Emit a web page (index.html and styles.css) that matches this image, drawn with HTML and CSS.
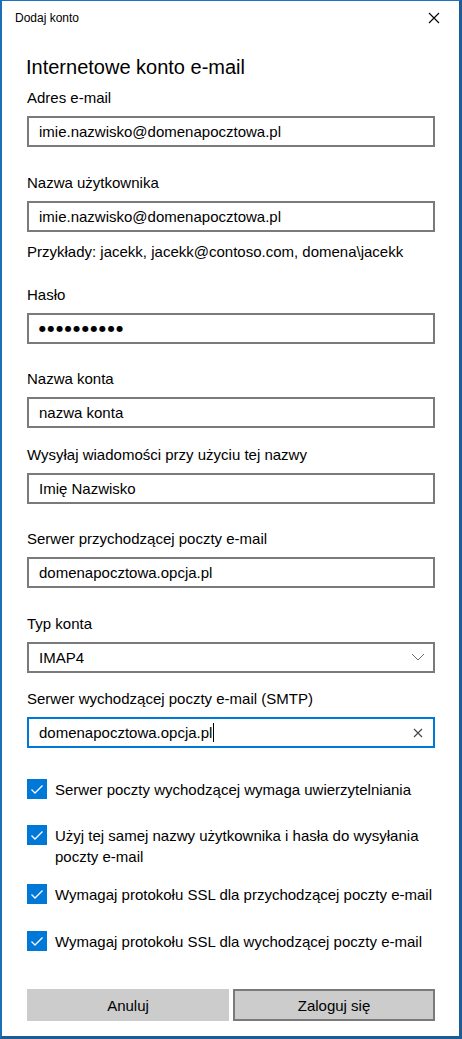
FILE: index.html
```html
<!DOCTYPE html>
<html lang="pl">
<head>
<meta charset="utf-8">
<title>Dodaj konto</title>
<link rel="stylesheet" href="styles.css">
</head>
<body>
<div class="window">
  <div class="titlebar">
    <span class="title">Dodaj konto</span>
    <svg class="close" width="12" height="12" viewBox="0 0 12 12"><path d="M1 1 L11 11 M11 1 L1 11" stroke="#000" stroke-width="1.1" fill="none"/></svg>
  </div>
  <div class="content">
    <h1 class="heading">Internetowe konto e-mail</h1>

    <div class="field field-first">
      <div class="label">Adres e-mail</div>
      <div class="input">imie.nazwisko@domenapocztowa.pl</div>
    </div>

    <div class="field">
      <div class="label">Nazwa użytkownika</div>
      <div class="input">imie.nazwisko@domenapocztowa.pl</div>
      <div class="hint">Przykłady: jacekk, jacekk@contoso.com, domena\jacekk</div>
    </div>

    <div class="field field-after-hint">
      <div class="label">Hasło</div>
      <div class="input"><span class="dots">●●●●●●●●●●</span></div>
    </div>

    <div class="field">
      <div class="label">Nazwa konta</div>
      <div class="input">nazwa konta</div>
    </div>

    <div class="field field-tight">
      <div class="label">Wysyłaj wiadomości przy użyciu tej nazwy</div>
      <div class="input">Imię Nazwisko</div>
    </div>

    <div class="field">
      <div class="label">Serwer przychodzącej poczty e-mail</div>
      <div class="input">domenapocztowa.opcja.pl</div>
    </div>

    <div class="field">
      <div class="label">Typ konta</div>
      <div class="input select">
        <span>IMAP4</span>
        <svg class="chevron" width="14" height="8" viewBox="0 0 14 8"><path d="M1 1 L7 7 L13 1" stroke="#6d6d6d" stroke-width="1" fill="none"/></svg>
      </div>
    </div>

    <div class="field field-tight">
      <div class="label">Serwer wychodzącej poczty e-mail (SMTP)</div>
      <div class="input focused">
        <span>domenapocztowa.opcja.pl</span><span class="caret"></span>
        <svg class="clear" width="10" height="10" viewBox="0 0 10 10"><path d="M1 1 L9 9 M9 1 L1 9" stroke="#444" stroke-width="1.1" fill="none"/></svg>
      </div>
    </div>

    <div class="checks">
      <div class="check">
        <span class="box"><svg width="20" height="20" viewBox="0 0 20 20"><path d="M4.5 10.5 L8 14 L15.5 6.5" stroke="#fff" stroke-width="1.3" fill="none"/></svg></span>
        <span class="check-text">Serwer poczty wychodzącej wymaga uwierzytelniania</span>
      </div>
      <div class="check check-multi">
        <span class="box"><svg width="20" height="20" viewBox="0 0 20 20"><path d="M4.5 10.5 L8 14 L15.5 6.5" stroke="#fff" stroke-width="1.3" fill="none"/></svg></span>
        <span class="check-text">Użyj tej samej nazwy użytkownika i hasła do wysyłania poczty e-mail</span>
      </div>
      <div class="check">
        <span class="box"><svg width="20" height="20" viewBox="0 0 20 20"><path d="M4.5 10.5 L8 14 L15.5 6.5" stroke="#fff" stroke-width="1.3" fill="none"/></svg></span>
        <span class="check-text">Wymagaj protokołu SSL dla przychodzącej poczty e-mail</span>
      </div>
      <div class="check">
        <span class="box"><svg width="20" height="20" viewBox="0 0 20 20"><path d="M4.5 10.5 L8 14 L15.5 6.5" stroke="#fff" stroke-width="1.3" fill="none"/></svg></span>
        <span class="check-text">Wymagaj protokołu SSL dla wychodzącej poczty e-mail</span>
      </div>
    </div>

    <div class="buttons">
      <button class="btn">Anuluj</button>
      <button class="btn btn-primary">Zaloguj się</button>
    </div>
  </div>
</div>
</body>
</html>
```
FILE: styles.css
```css
* { box-sizing: border-box; }
html, body {
  margin: 0;
  padding: 0;
  background: #1d5d94;
}
body {
  font-family: "Liberation Sans", Arial, sans-serif;
  color: #000;
  width: 462px;
  height: 1039px;
}
.window {
  width: 462px;
  height: 1039px;
  background: #fff;
  border-top: 1px solid #1a73c4;
  border-left: 2px solid #1a6fb8;
  border-right: 3px solid #1d5d94;
  border-bottom: 3px solid #1d5d94;
  display: flex;
  flex-direction: column;
}
.titlebar {
  height: 33px;
  display: flex;
  align-items: center;
  justify-content: space-between;
  padding: 0 19px 0 13px;
}
.title {
  font-size: 12px;
}
.close { display: block; }
.content {
  padding: 0 24px 0 25px;
  display: flex;
  flex-direction: column;
}
.heading {
  margin: 19px 0 0 -1px;
  font-size: 20px;
  font-weight: normal;
  line-height: 28px;
}
.field {
  margin-top: 25.5px;
  display: flex;
  flex-direction: column;
}
.field-first { margin-top: 7px; }
.field-after-hint { margin-top: 23px; }
.field-tight { margin-top: 16.5px; }
.label {
  font-size: 15px;
  line-height: 20px;
  height: 20px;
  margin-bottom: 8px;
}
.input {
  height: 31px;
  border: 2px solid #7a7a7a;
  font-size: 15px;
  line-height: 27px;
  padding: 0 10px;
  display: flex;
  align-items: center;
  white-space: nowrap;
}
.hint {
  font-size: 15px;
  line-height: 20px;
  margin-top: 10px;
}
.dots {
  font-family: "DejaVu Sans", sans-serif;
  font-size: 8px;
  letter-spacing: 1.6px;
}
.select { justify-content: space-between; padding-right: 8px; }
.focused { border-color: #0078d7; }
.caret {
  width: 1px;
  height: 19px;
  background: #000;
  margin-left: 1px;
}
.clear { margin-left: auto; }
.checks {
  margin-top: 31px;
  display: flex;
  flex-direction: column;
}
.check {
  display: flex;
  align-items: flex-start;
}
.check + .check { margin-top: 25px; }
.check-multi + .check { margin-top: 17px; }
.check-multi + .check + .check { margin-top: 26px; }
.box {
  width: 20px;
  height: 20px;
  flex: none;
  background: #0078d7;
  margin-right: 8px;
}
.box svg { display: block; }
.check-text {
  font-size: 15px;
  line-height: 21px;
}
.buttons {
  margin-top: 37px;
  display: flex;
  gap: 4px;
}
.btn {
  flex: 1;
  height: 32px;
  background: #cccccc;
  border: 2px solid #cccccc;
  font-family: inherit;
  font-size: 15px;
  color: #000;
  padding: 0;
}
.btn-primary { border-color: #7a7a7a; }
```
